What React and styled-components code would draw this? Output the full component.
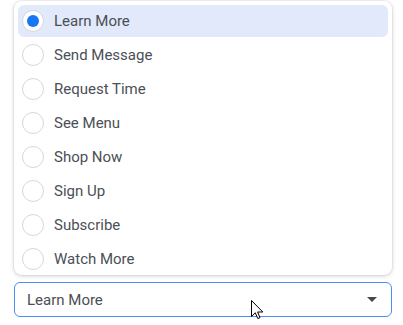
import styled, { createGlobalStyle } from "styled-components";

const GlobalStyle = createGlobalStyle`
  html, body {
    margin: 0;
    background: #fff;
    font-family: Roboto, "Liberation Sans", sans-serif;
  }
`;

const Page = styled.div`
  position: relative;
  width: 403px;
  height: 325px;
  padding: 1px 11px 0 14px;
  box-sizing: border-box;
  display: flex;
  flex-direction: column;
  gap: 7px;
`;

const Menu = styled.ul`
  list-style: none;
  margin: 0;
  padding: 4px 4px 0;
  background: #fff;
  border-radius: 8px;
  box-shadow: 0 1px 4px rgba(0, 0, 0, 0.18), 0 0 0 1px rgba(0, 0, 0, 0.04);
  display: flex;
  flex-direction: column;
  gap: 2px;
`;

const Option = styled.li`
  display: flex;
  align-items: center;
  gap: 10px;
  height: 32px;
  padding: 0 4px;
  border-radius: 6px;
  background: ${(p) => (p.$active ? "#e1e9fa" : "transparent")};
  color: #4b4f56;
  font-size: 15px;
`;

const Radio = styled.span`
  width: 22px;
  height: 22px;
  box-sizing: border-box;
  border-radius: 50%;
  border: 1px solid #d6d8dc;
  background: #fff;
  display: flex;
  align-items: center;
  justify-content: center;

  &::after {
    content: "";
    width: 12px;
    height: 12px;
    border-radius: 50%;
    background: #1877f2;
    display: ${(p) => (p.$active ? "block" : "none")};
  }
`;

const Select = styled.div`
  height: 35px;
  box-sizing: border-box;
  border: 1px solid #4a8df0;
  border-radius: 6px;
  display: flex;
  align-items: center;
  justify-content: space-between;
  padding: 0 14px 0 12px;
  color: #4b4f56;
  font-size: 15px;
`;

const Caret = styled.span`
  width: 0;
  height: 0;
  border-left: 5px solid transparent;
  border-right: 5px solid transparent;
  border-top: 5px solid #45484d;
`;

const Cursor = styled.svg`
  position: absolute;
  left: 251px;
  top: 300px;
`;

const options = [
  "Learn More",
  "Send Message",
  "Request Time",
  "See Menu",
  "Shop Now",
  "Sign Up",
  "Subscribe",
  "Watch More",
];

export default function App() {
  const selected = "Learn More";
  return (
    <Page>
      <GlobalStyle />
      <Menu>
        {options.map((label) => (
          <Option key={label} $active={label === selected}>
            <Radio $active={label === selected} />
            {label}
          </Option>
        ))}
      </Menu>
      <Select>
        {selected}
        <Caret />
      </Select>
      <Cursor width="13" height="20" viewBox="0 0 13 20">
        <path
          d="M0.5 0.5 L0.5 16.5 L4.3 12.8 L6.8 18.6 L9 17.6 L6.6 12 L11.8 12 Z"
          fill="#fff"
          stroke="#000"
          strokeWidth="1"
          strokeLinejoin="miter"
        />
      </Cursor>
    </Page>
  );
}
